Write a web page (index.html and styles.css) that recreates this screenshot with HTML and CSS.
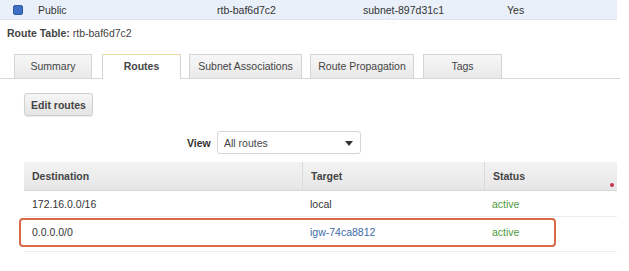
FILE: index.html
```html
<!DOCTYPE html>
<html lang="en">
<head>
    <meta charset="UTF-8">
    <link rel="stylesheet" href="styles.css">
    <title>Route Table</title>
</head>
<body>
    <div class="subnet-row">
        <span class="check"></span>
        <span class="c-name">Public</span>
        <span class="c-rtb">rtb-baf6d7c2</span>
        <span class="c-subnet">subnet-897d31c1</span>
        <span class="c-main">Yes</span>
        <span class="dots">...</span>
    </div>

    <div class="title"><b>Route Table:</b> rtb-baf6d7c2</div>

    <div class="tabs">
        <div class="tab t-summary">Summary</div>
        <div class="tab t-routes current">Routes</div>
        <div class="tab t-subnet">Subnet Associations</div>
        <div class="tab t-prop">Route Propagation</div>
        <div class="tab t-tags">Tags</div>
    </div>

    <div class="panel">
        <button class="btn">Edit routes</button>

        <div class="view-row">
            <span class="view-label">View</span>
            <div class="select">
                <span>All routes</span>
                <span class="caret"></span>
            </div>
        </div>

        <div class="table">
            <div class="thead">
                <div class="cell col-dest">Destination</div>
                <div class="cell col-target">Target</div>
                <div class="cell col-status">Status</div>
                <span class="red-dot"></span>
            </div>
            <div class="trow">
                <div class="cell col-dest">172.16.0.0/16</div>
                <div class="cell col-target">local</div>
                <div class="cell col-status status-ok">active</div>
            </div>
            <div class="trow marked">
                <div class="cell col-dest">0.0.0.0/0</div>
                <div class="cell col-target"><a class="link">igw-74ca8812</a></div>
                <div class="cell col-status status-ok">active</div>
                <span class="mark"></span>
            </div>
        </div>
    </div>
</body>
</html>
```

FILE: styles.css
```css
* {
    margin: 0;
    padding: 0;
    box-sizing: border-box;
}

body {
    width: 629px;
    height: 271px;
    overflow: hidden;
    background: #fff;
    color: #333;
    font-family: "Liberation Sans", Arial, sans-serif;
    font-size: 10.5px;
}

/* selected subnet row */
.subnet-row {
    position: relative;
    display: flex;
    align-items: center;
    width: 617px;
    height: 20px;
    background: #e9f0f9;
    border-bottom: 1px solid #dde5ef;
}

.check {
    width: 10px;
    height: 10px;
    margin-left: 13px;
    background: #3f6fc4;
    border: 1px solid #2f5aa8;
    border-radius: 2px;
}

.c-name { margin-left: 15px; width: 179px; }
.c-rtb { width: 146px; }
.c-subnet { width: 144px; }

.dots {
    position: absolute;
    left: 386px;
    top: 17px;
    font-size: 7px;
    color: #ccc;
    letter-spacing: 1px;
}

.title {
    padding: 7px 0 0 7px;
    height: 26px;
    color: #444;
}

/* tabs */
.tabs {
    display: flex;
    align-items: flex-end;
    width: 620px;
    margin-top: 1px;
    padding-left: 14px;
    border-bottom: 1px solid #d8d8d8;
    height: 32px;
}

.tab {
    height: 24px;
    margin-right: 8px;
    border: 1px solid #d4d4d4;
    border-bottom: none;
    background: linear-gradient(#f7f7f7, #e9e9e9);
    color: #444;
    text-align: center;
    line-height: 22px;
}

.tab.current {
    background: #fff;
    border-top: 1px solid #f1dca6;
    font-weight: bold;
    height: 25px;
    margin-bottom: -1px;
}

.t-summary { width: 78px; margin-right: 10px; }
.t-routes { width: 79px; }
.t-subnet { width: 113px; }
.t-prop { width: 104px; margin-right: 9px; }
.t-tags { width: 79px; }

/* panel */
.panel {
    padding-left: 24px;
}

.btn {
    display: block;
    margin-top: 14px;
    width: 69px;
    height: 23px;
    border: 1px solid #cfcfcf;
    border-radius: 3px;
    background: linear-gradient(#f6f6f6, #e4e4e4);
    box-shadow: 0 1px 1px rgba(0, 0, 0, 0.08);
    font-family: inherit;
    font-size: 10.5px;
    font-weight: bold;
    color: #444;
}

.view-row {
    display: flex;
    align-items: center;
    margin-top: 15px;
    padding-left: 163px;
}

.view-label {
    font-weight: bold;
    width: 30px;
}

.select {
    position: relative;
    display: flex;
    align-items: center;
    width: 144px;
    height: 23px;
    padding-left: 6px;
    border: 1px solid #d6d6d6;
    border-radius: 3px;
    background: #fff;
    color: #444;
}

.caret {
    position: absolute;
    right: 7px;
    top: 9px;
    border-left: 4px solid transparent;
    border-right: 4px solid transparent;
    border-top: 5px solid #333;
}

/* routes table */
.table {
    margin-top: 8px;
    width: 593px;
}

.thead,
.trow {
    position: relative;
    display: flex;
    align-items: center;
}

.thead {
    height: 29px;
    background: linear-gradient(#f3f3f3, #e6e6e6);
    border-bottom: 1px solid #d6d6d6;
    font-weight: bold;
    color: #444;
}

.thead .cell + .cell {
    border-left: 1px solid #dadada;
}

.trow {
    height: 26px;
    border-bottom: 1px solid #ececec;
}

.cell {
    padding-left: 8px;
    height: 100%;
    display: flex;
    align-items: center;
}

.col-dest { width: 278px; }
.col-target { width: 182px; }
.col-status { width: 133px; }

.status-ok {
    color: #4e9a3e;
}

.link {
    color: #3d6aa6;
}

.red-dot {
    position: absolute;
    right: 3px;
    top: 21px;
    width: 4px;
    height: 4px;
    border-radius: 50%;
    background: #c8324a;
}

.trow.marked {
    height: 35px;
    padding-bottom: 5px;
}

.mark {
    position: absolute;
    left: -5px;
    top: 1px;
    width: 537px;
    height: 29px;
    border: 2px solid #d86a4b;
    border-radius: 4px;
}
```
